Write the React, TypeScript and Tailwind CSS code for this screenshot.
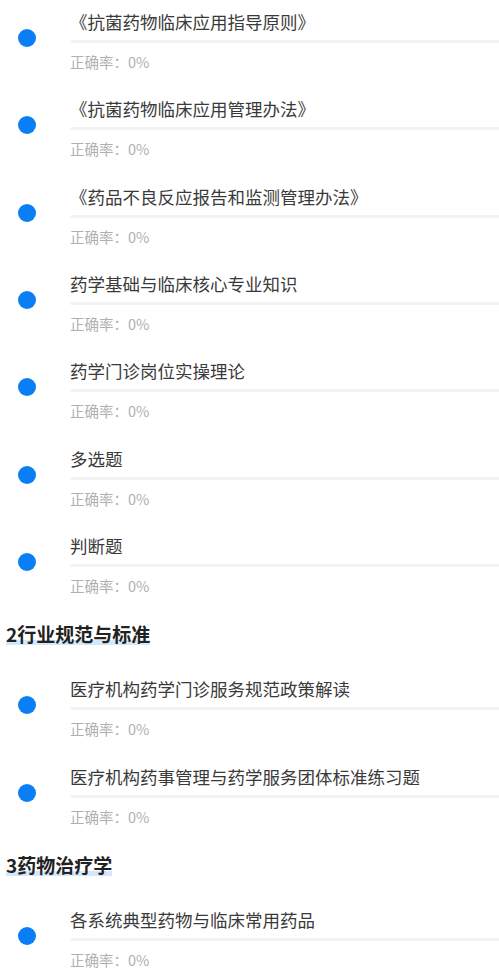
import React from "react";

type Item = { title: string };
type Section = { heading?: string; items: Item[] };

const sections: Section[] = [
  {
    items: [
      { title: "《抗菌药物临床应用指导原则》" },
      { title: "《抗菌药物临床应用管理办法》" },
      { title: "《药品不良反应报告和监测管理办法》" },
      { title: "药学基础与临床核心专业知识" },
      { title: "药学门诊岗位实操理论" },
      { title: "多选题" },
      { title: "判断题" },
    ],
  },
  {
    heading: "2行业规范与标准",
    items: [
      { title: "医疗机构药学门诊服务规范政策解读" },
      { title: "医疗机构药事管理与药学服务团体标准练习题" },
    ],
  },
  {
    heading: "3药物治疗学",
    items: [{ title: "各系统典型药物与临床常用药品" }],
  },
];

function Row({ item }: { item: Item }) {
  return (
    <div className="flex pb-[15.33px] pt-[10px]">
      <div className="w-[70px] shrink-0">
        <div className="ml-[18px] mt-[19px] h-[18px] w-[18px] rounded-full bg-[#0a7ff5]" />
      </div>
      <div className="flex min-w-0 flex-1 flex-col">
        <div className="h-[24px] whitespace-nowrap text-[17.5px] leading-[24px] text-[#3a3a3a]">
          {item.title}
        </div>
        <div className="mt-[6px] h-[3px] rounded-l-full bg-[#f3f3f3]" />
        <div className="mt-[9px] h-[20px] text-[14.5px] leading-[20px] text-[#b0b0b0]">
          正确率：0%
        </div>
      </div>
    </div>
  );
}

export default function App() {
  return (
    <div
      className="min-h-screen w-full bg-white"
      style={{ fontFamily: '"Noto Sans CJK SC", "Noto Sans", sans-serif' }}
    >
      {sections.map((s, i) => (
        <div key={i}>
          {s.heading && (
            <div className="mb-[19px] mt-[9px] h-[28px] pl-[6px]">
              <span className="relative inline-block h-[28px]">
                <span className="absolute left-0 right-0 top-[20px] h-[5px] bg-[#d4e7fc]" />
                <span className="relative text-[19px] font-bold leading-[28px] text-[#222222]">
                  {s.heading}
                </span>
              </span>
            </div>
          )}
          {s.items.map((it, j) => (
            <Row key={j} item={it} />
          ))}
        </div>
      ))}
    </div>
  );
}
